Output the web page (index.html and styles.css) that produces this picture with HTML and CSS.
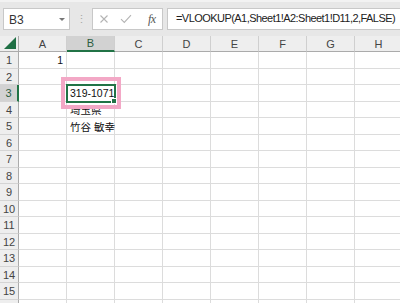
FILE: index.html
```html
<!DOCTYPE html>
<html lang="ja">
<head>
<meta charset="utf-8">
<link rel="stylesheet" href="styles.css">
</head>
<body>
<div class="app">
  <div class="toolbar">
    <div class="namebox"><span class="ref">B3</span><span class="caret"></span></div>
    <div class="grip">⋮</div>
    <div class="fxbox">
      <svg class="ico" width="10" height="10" viewBox="0 0 10 10"><path d="M1.5 1.5L8.5 8.5M8.5 1.5L1.5 8.5" stroke="#b4b4b4" stroke-width="1.1" fill="none"/></svg>
      <svg class="ico" width="12" height="10" viewBox="0 0 12 10"><path d="M1 5.2L4.3 8.4L11 1.2" stroke="#b4b4b4" stroke-width="1.1" fill="none"/></svg>
      <span class="fx">fx</span>
    </div>
    <div class="formula">=VLOOKUP(A1,Sheet1!A2:Sheet1!D11,2,FALSE)</div>
  </div>
  <div class="sheet">
    <div class="corner"><svg width="12" height="12" viewBox="0 0 12 12"><path d="M12 0L12 12L0 12Z" fill="#1f6f44"/></svg></div>
    <div class="ch">A</div><div class="ch sel">B</div><div class="ch">C</div><div class="ch">D</div><div class="ch">E</div><div class="ch">F</div><div class="ch">G</div><div class="ch">H</div>

    <div class="rh">1</div><div class="c num">1</div><div class="c"></div><div class="c"></div><div class="c"></div><div class="c"></div><div class="c"></div><div class="c"></div><div class="c"></div>
    <div class="rh">2</div><div class="c"></div><div class="c"></div><div class="c"></div><div class="c"></div><div class="c"></div><div class="c"></div><div class="c"></div><div class="c"></div>
    <div class="rh sel">3</div><div class="c"></div><div class="c active">319-1071<span class="handle"></span></div><div class="c"></div><div class="c"></div><div class="c"></div><div class="c"></div><div class="c"></div><div class="c"></div>
    <div class="rh">4</div><div class="c"></div><div class="c">埼玉県</div><div class="c"></div><div class="c"></div><div class="c"></div><div class="c"></div><div class="c"></div><div class="c"></div>
    <div class="rh">5</div><div class="c"></div><div class="c">竹谷 敏幸</div><div class="c"></div><div class="c"></div><div class="c"></div><div class="c"></div><div class="c"></div><div class="c"></div>
    <div class="rh">6</div><div class="c"></div><div class="c"></div><div class="c"></div><div class="c"></div><div class="c"></div><div class="c"></div><div class="c"></div><div class="c"></div>
    <div class="rh">7</div><div class="c"></div><div class="c"></div><div class="c"></div><div class="c"></div><div class="c"></div><div class="c"></div><div class="c"></div><div class="c"></div>
    <div class="rh">8</div><div class="c"></div><div class="c"></div><div class="c"></div><div class="c"></div><div class="c"></div><div class="c"></div><div class="c"></div><div class="c"></div>
    <div class="rh">9</div><div class="c"></div><div class="c"></div><div class="c"></div><div class="c"></div><div class="c"></div><div class="c"></div><div class="c"></div><div class="c"></div>
    <div class="rh">10</div><div class="c"></div><div class="c"></div><div class="c"></div><div class="c"></div><div class="c"></div><div class="c"></div><div class="c"></div><div class="c"></div>
    <div class="rh">11</div><div class="c"></div><div class="c"></div><div class="c"></div><div class="c"></div><div class="c"></div><div class="c"></div><div class="c"></div><div class="c"></div>
    <div class="rh">12</div><div class="c"></div><div class="c"></div><div class="c"></div><div class="c"></div><div class="c"></div><div class="c"></div><div class="c"></div><div class="c"></div>
    <div class="rh">13</div><div class="c"></div><div class="c"></div><div class="c"></div><div class="c"></div><div class="c"></div><div class="c"></div><div class="c"></div><div class="c"></div>
    <div class="rh">14</div><div class="c"></div><div class="c"></div><div class="c"></div><div class="c"></div><div class="c"></div><div class="c"></div><div class="c"></div><div class="c"></div>
    <div class="rh">15</div><div class="c"></div><div class="c"></div><div class="c"></div><div class="c"></div><div class="c"></div><div class="c"></div><div class="c"></div><div class="c"></div>
    <div class="rh"></div><div class="c"></div><div class="c"></div><div class="c"></div><div class="c"></div><div class="c"></div><div class="c"></div><div class="c"></div><div class="c"></div>
  </div>
  <div class="mark"></div>
</div>
</body>
</html>
```

FILE: styles.css
```css
html, body {
  margin: 0;
  padding: 0;
  background: #ffffff;
}
.app {
  position: relative;
  width: 400px;
  height: 303px;
  overflow: hidden;
  font-family: "Liberation Sans", "Noto Sans CJK JP", sans-serif;
  font-size: 11px;
  color: #222;
}
.toolbar {
  height: 36px;
  box-sizing: border-box;
  background: #e7e7e7;
  border-top: 2px solid #f2f2f2;
  padding: 6px 0 0 3px;
  display: flex;
  align-items: flex-start;
}
.namebox {
  width: 67px;
  height: 22px;
  box-sizing: border-box;
  background: #fff;
  border: 1px solid #c8c8c8;
  display: flex;
  align-items: center;
  justify-content: space-between;
  padding: 2px 4px 0 5px;
  font-size: 12px;
  color: #333;
}
.caret {
  width: 0;
  height: 0;
  border-left: 3px solid transparent;
  border-right: 3px solid transparent;
  border-top: 3px solid #777;
  margin-top: -1px;
}
.grip {
  width: 22px;
  height: 22px;
  display: flex;
  align-items: center;
  justify-content: center;
  color: #a8a8a8;
  font-size: 11px;
}
.fxbox {
  width: 71px;
  height: 22px;
  box-sizing: border-box;
  background: #fff;
  border: 1px solid #c8c8c8;
  display: flex;
  align-items: center;
  padding-left: 6px;
}
.fxbox .ico:first-child {
  margin-right: 11px;
}
.fxbox .ico:nth-child(2) {
  margin-right: 16px;
}
.fx {
  font-family: "Liberation Serif", serif;
  font-style: italic;
  font-size: 12px;
  color: #555;
  letter-spacing: -0.5px;
}
.formula {
  flex: 1;
  margin-left: 4px;
  height: 22px;
  box-sizing: border-box;
  background: #fff;
  border: 1px solid #c8c8c8;
  border-right: none;
  padding: 3px 0 0 8px;
  font-size: 11px;
  letter-spacing: -0.55px;
  color: #222;
  white-space: nowrap;
  overflow: hidden;
}
.sheet {
  display: grid;
  grid-template-columns: 19px repeat(8, 48px);
  grid-template-rows: 16px;
  grid-auto-rows: 16.5px;
}
.corner {
  background: #eeeeee;
  border-right: 1px solid #ababab;
  border-bottom: 1px solid #ababab;
  box-sizing: border-box;
  display: flex;
  align-items: flex-end;
  justify-content: flex-end;
  padding: 0 2px 2px 0;
}
.ch {
  background: #eeeeee;
  border-right: 1px solid #cfcfcf;
  border-bottom: 1px solid #ababab;
  box-sizing: border-box;
  display: flex;
  align-items: center;
  justify-content: center;
  color: #444;
  font-size: 11px;
}
.ch.sel {
  background: #d2d2d2;
  border-bottom: 2px solid #217346;
  color: #2a5c3f;
}
.rh {
  background: #eeeeee;
  border-right: 1px solid #ababab;
  border-bottom: 1px solid #d4d4d4;
  box-sizing: border-box;
  display: flex;
  align-items: center;
  justify-content: center;
  color: #444;
  font-size: 11px;
  padding-top: 1px;
}
.rh.sel {
  background: #d2d2d2;
  border-right: 2px solid #217346;
  color: #2a5c3f;
}
.c {
  border-right: 1px solid #dcdcdc;
  border-bottom: 1px solid #dcdcdc;
  box-sizing: border-box;
  display: flex;
  align-items: center;
  padding: 1px 2px 0 3px;
  white-space: nowrap;
  font-size: 10.5px;
  color: #111;
  font-family: "Liberation Sans", "Noto Sans CJK JP", sans-serif;
}
.c.num {
  justify-content: flex-end;
  padding-right: 3px;
}
.c.active {
  position: relative;
  z-index: 2;
  outline: 2px solid #217346;
  outline-offset: -1px;
}
.handle {
  position: absolute;
  right: -3px;
  bottom: -3px;
  width: 4px;
  height: 4px;
  background: #217346;
  border: 1px solid #fff;
}
.mark {
  position: absolute;
  left: 61px;
  top: 77px;
  width: 60px;
  height: 32px;
  box-sizing: border-box;
  border: 4px solid #f3a8c6;
  z-index: 3;
}
```
